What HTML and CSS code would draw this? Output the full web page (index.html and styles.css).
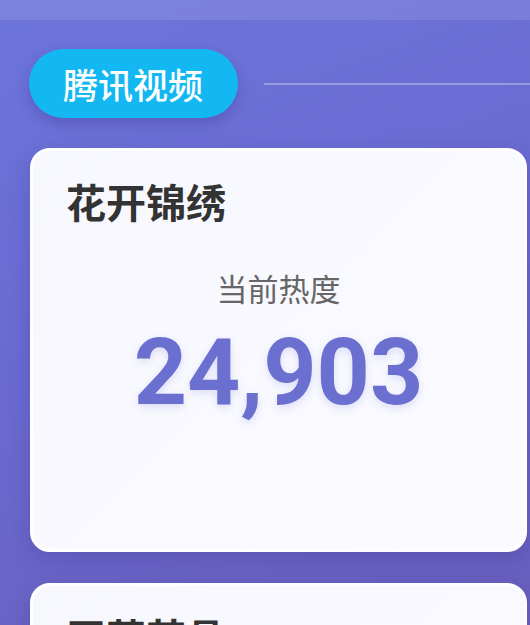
FILE: index.html
```html
<!DOCTYPE html>
<html lang="zh-CN">
<head>
<meta charset="utf-8">
<title>热度</title>
<link rel="stylesheet" href="styles.css">
</head>
<body>
<div class="topbar"></div>
<main class="main">
  <div class="header">
    <div class="pill">腾讯视频</div>
    <div class="line"></div>
  </div>
  <section class="card">
    <h2 class="card-title">花开锦绣</h2>
    <div class="label">当前热度</div>
    <div class="value">24,903</div>
  </section>
  <section class="card">
    <h2 class="card-title">玉茗茶骨</h2>
  </section>
</main>
</body>
</html>
```
FILE: styles.css
```css
html, body {
  margin: 0;
  padding: 0;
}
body {
  width: 530px;
  height: 625px;
  overflow: hidden;
  background: linear-gradient(160deg, #6c75da 0%, #6a6ad0 50%, #6a5fbd 100%);
  font-family: "Noto Sans CJK SC", "Noto Sans", sans-serif;
}
.topbar {
  height: 20px;
  background: rgba(255, 255, 255, 0.1);
}
.main {
  padding: 29px 3px 0 30px;
}
.header {
  display: flex;
  align-items: center;
  gap: 26px;
  margin-left: -1px;
  margin-right: -3px;
}
.pill {
  height: 69px;
  padding: 0 35px 0 34px;
  display: flex;
  align-items: center;
  background: #13b8f2;
  border-radius: 35px;
  color: #fff;
  font-size: 35px;
  font-weight: 500;
  box-shadow: 0 6px 14px rgba(40, 30, 120, 0.25);
}
.line {
  flex: 1;
  height: 2px;
  background: rgba(255, 255, 255, 0.3);
}
.card {
  margin-top: 30px;
  box-sizing: border-box;
  height: 404px;
  padding: 26px 33px 0;
  background: linear-gradient(135deg, #f7f8fe 0%, #fafaff 100%);
  border: 3px solid #fff;
  border-radius: 20px;
  box-shadow: 0 8px 24px rgba(40, 30, 120, 0.2);
}
.card + .card {
  margin-top: 31px;
}
.card-title {
  margin: 0;
  font-size: 40px;
  line-height: 1.2;
  font-weight: 700;
  color: #333;
}
.label {
  margin-top: 44px;
  text-align: center;
  font-size: 31px;
  line-height: 1.2;
  color: #666;
}
.value {
  margin-top: 20px;
  text-align: center;
  font-family: Roboto, "Noto Sans", sans-serif;
  font-size: 93px;
  line-height: 1;
  font-weight: 700;
  color: #6b6fd0;
  text-shadow: 0 3px 8px rgba(107, 111, 208, 0.2);
}
```
